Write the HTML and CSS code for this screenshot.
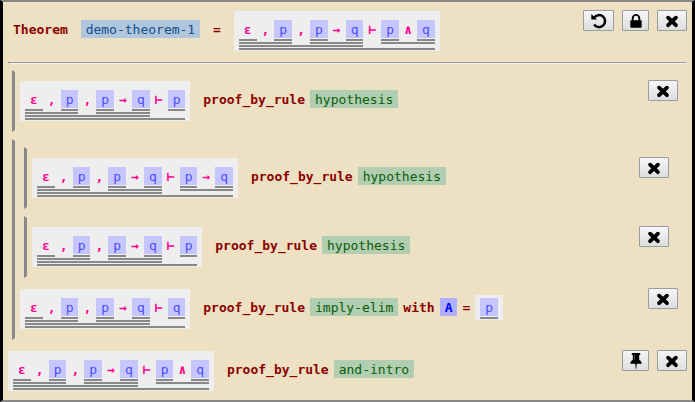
FILE: index.html
```
<!DOCTYPE html>
<html lang="en">
<head>
<meta charset="utf-8">
<title>Theorem demo-theorem-1</title>
<link rel="stylesheet" href="styles.css">
</head>
<body>
<svg class="defs" width="0" height="0" aria-hidden="true">
  <symbol id="x" viewBox="0 0 14 14"><path d="M3.1 3.7 10.9 11.1M10.9 3.7 3.1 11.1" fill="none" stroke="#000" stroke-width="3.9" stroke-linecap="round"/></symbol>
  <symbol id="undo" viewBox="0 0 16 16"><path d="M3.2 4.6A6 6 0 1 1 3.1 11.5" fill="none" stroke="#000" stroke-width="2.5"/><path d="M.3 .9V6.6H6.1Z"/></symbol>
  <symbol id="lock" viewBox="0 0 12 14"><path d="M2.7 7V4.2a3.3 3.3 0 0 1 6.6 0V7" fill="none" stroke="#000" stroke-width="1.9"/><rect x=".3" y="6.3" width="11.4" height="7.4" rx="1"/></symbol>
  <symbol id="pin" viewBox="0 0 12 16"><path d="M1.8 0H10.2V2H9.2V7C10.8 7.7 11.7 8.8 11.7 10.8H6.8L6.2 16H5.8L5.2 10.8H.3C.3 8.8 1.2 7.7 2.8 7V2H1.8Z"/><path d="M4.4 2.2V6.6" stroke="#888" stroke-width=".6"/></symbol>
</svg>
<main class="window">
  <header class="row">
    <span class="kw">Theorem</span>
    <span class="tok name">demo-theorem-1</span>
    <span class="kw equals">=</span>
    <span class="formula"><span class="e"><span class="e"><span class="e"><span class="e op">ε</span><b class="op">,</b><span class="e"><i>p</i></span></span><b class="op">,</b><span class="e"><span class="e"><i>p</i></span><b class="op">→</b><span class="e"><i>q</i></span></span></span><b class="op">⊢</b><span class="e"><span class="e"><i>p</i></span><b class="op">∧</b><span class="e"><i>q</i></span></span></span></span>
    <span class="buttons"><button class="wide" aria-label="Undo"><svg width="16" height="16"><use href="#undo"/></svg></button><button class="narrow" aria-label="Lock"><svg width="12" height="14"><use href="#lock"/></svg></button><button aria-label="Delete"><svg width="14" height="14"><use href="#x"/></svg></button></span>
  </header>
  <hr>
  <section class="block">
    <div class="row">
      <span class="formula"><span class="e"><span class="e"><span class="e"><span class="e op">ε</span><b class="op">,</b><span class="e"><i>p</i></span></span><b class="op">,</b><span class="e"><span class="e"><i>p</i></span><b class="op">→</b><span class="e"><i>q</i></span></span></span><b class="op">⊢</b><span class="e"><i>p</i></span></span></span>
      <span class="kw by">proof_by_rule</span><span class="tok rule">hypothesis</span>
      <span class="buttons"><button aria-label="Delete"><svg width="14" height="14"><use href="#x"/></svg></button></span>
    </div>
  </section>
  <section class="block outer">
    <section class="block">
      <div class="row">
        <span class="formula"><span class="e"><span class="e"><span class="e"><span class="e op">ε</span><b class="op">,</b><span class="e"><i>p</i></span></span><b class="op">,</b><span class="e"><span class="e"><i>p</i></span><b class="op">→</b><span class="e"><i>q</i></span></span></span><b class="op">⊢</b><span class="e"><span class="e"><i>p</i></span><b class="op">→</b><span class="e"><i>q</i></span></span></span></span>
        <span class="kw by">proof_by_rule</span><span class="tok rule">hypothesis</span>
        <span class="buttons"><button aria-label="Delete"><svg width="14" height="14"><use href="#x"/></svg></button></span>
      </div>
    </section>
    <section class="block">
      <div class="row">
        <span class="formula"><span class="e"><span class="e"><span class="e"><span class="e op">ε</span><b class="op">,</b><span class="e"><i>p</i></span></span><b class="op">,</b><span class="e"><span class="e"><i>p</i></span><b class="op">→</b><span class="e"><i>q</i></span></span></span><b class="op">⊢</b><span class="e"><i>p</i></span></span></span>
        <span class="kw by">proof_by_rule</span><span class="tok rule">hypothesis</span>
        <span class="buttons"><button aria-label="Delete"><svg width="14" height="14"><use href="#x"/></svg></button></span>
      </div>
    </section>
    <div class="row">
      <span class="formula"><span class="e"><span class="e"><span class="e"><span class="e op">ε</span><b class="op">,</b><span class="e"><i>p</i></span></span><b class="op">,</b><span class="e"><span class="e"><i>p</i></span><b class="op">→</b><span class="e"><i>q</i></span></span></span><b class="op">⊢</b><span class="e"><i>q</i></span></span></span>
      <span class="kw by">proof_by_rule</span><span class="tok rule">imply-elim</span><span class="kw">with</span><span class="tok var">A</span><span class="kw">=</span><span class="formula small"><span class="e"><i>p</i></span></span>
      <span class="buttons"><button aria-label="Delete"><svg width="14" height="14"><use href="#x"/></svg></button></span>
    </div>
  </section>
  <div class="row last">
    <span class="formula"><span class="e"><span class="e"><span class="e"><span class="e op">ε</span><b class="op">,</b><span class="e"><i>p</i></span></span><b class="op">,</b><span class="e"><span class="e"><i>p</i></span><b class="op">→</b><span class="e"><i>q</i></span></span></span><b class="op">⊢</b><span class="e"><span class="e"><i>p</i></span><b class="op">∧</b><span class="e"><i>q</i></span></span></span></span>
    <span class="kw by">proof_by_rule</span><span class="tok rule">and-intro</span>
    <span class="buttons"><button class="narrow" aria-label="Pin"><svg width="12" height="16"><use href="#pin"/></svg></button><button aria-label="Delete"><svg width="14" height="14"><use href="#x"/></svg></button></span>
  </div>
</main>
</body>
</html>
```
FILE: styles.css
```
* { box-sizing: border-box; }

body {
  margin: 0;
  background: #000;
  font: 13px/16px "DejaVu Sans Mono", monospace;
}

.defs { display: none; }

.window {
  height: 402px;
  padding: 9px 5px 0;
  border: solid;
  border-width: 2px 3px;
  border-color: #888 #000;
  background: #eee0c3;
}

.row {
  display: flex;
  align-items: flex-start;
  height: 40px;
}

.kw, .tok {
  margin-top: 9px;
  padding: 2px 5px 0;
  white-space: pre;
}

.kw { color: #8b0000; font-weight: bold; }
.name { margin-left: 7.83px; background: #b0c6dc; color: #104e8b; }
.equals { margin: 9px 7.83px 0; }
.by { margin-left: 7.83px; }
.rule { background: #b1ceb1; color: #0a5c0a; }
.var { background: #b0b0ff; color: #00f; font-weight: bold; }

.formula {
  display: flex;
  padding: 9px 5px 1px;
  background: #eee;
}

.formula.small { margin-top: 6px; padding-top: 3px; }

.e {
  display: flex;
  align-items: flex-start;
  padding-bottom: 1px;
  border-bottom: 2px solid #888;
}

.op, .e i { padding: 2px 5px 0; }
.op { color: #ff0090; font-weight: bold; }
.e.op { padding-bottom: 1px; }
.e i { background: #c6c6ff; color: #4b4bff; font-style: normal; }

hr {
  height: 2px;
  margin: 11px 0 6px;
  border: 1px solid;
  border-color: #9a9a9a #eee #eee #9a9a9a;
}

.block {
  margin: 0 4px 7px;
  padding: 9px 5px 9px;
  border: solid transparent;
  border-width: 2px 0 2px 3px;
  border-left-color: #888;
}

.outer { margin-bottom: 11px; padding-top: 6px; }
.outer > .row { margin-top: 11px; }
.outer > .block:nth-child(2) { margin-bottom: 0; }

.buttons {
  display: flex;
  gap: 8px;
  margin: -1px 0 0 auto;
}

button {
  display: flex;
  align-items: center;
  justify-content: center;
  width: 30px;
  height: 21px;
  padding: 0;
  border: 1px solid #999ba2;
  border-radius: 1px;
  background: linear-gradient(#f6f6f6, #dedede);
}

.wide { width: 31px; }
.narrow { width: 27px; }
```
